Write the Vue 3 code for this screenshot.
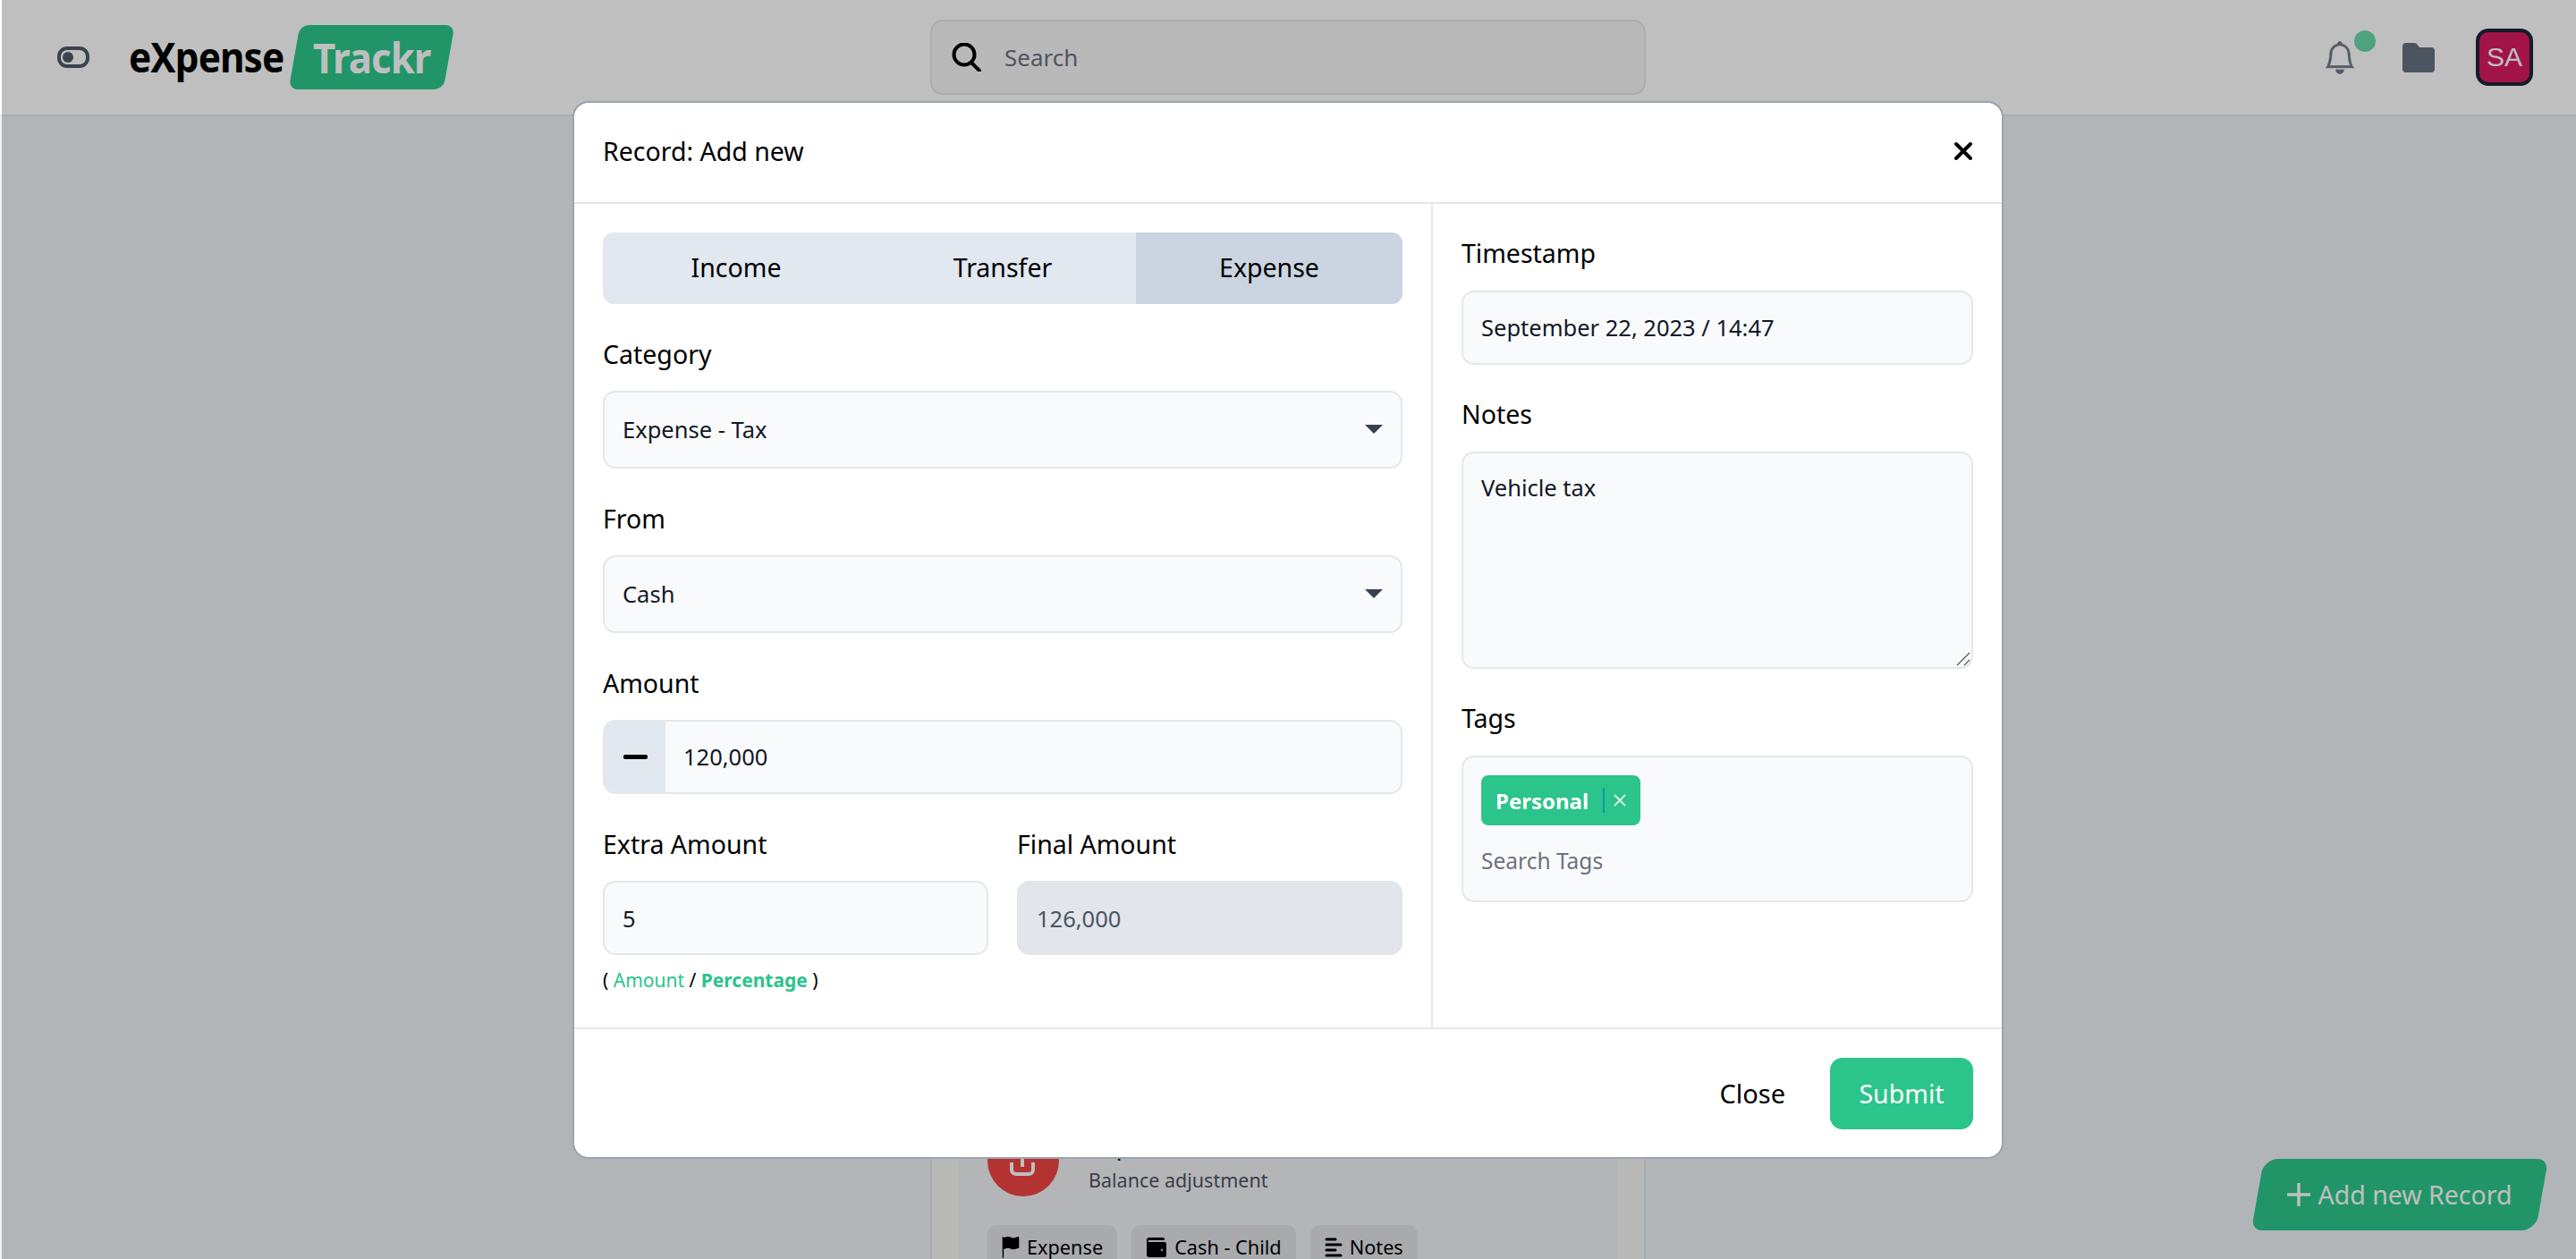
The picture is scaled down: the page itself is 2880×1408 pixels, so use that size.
<template>
  <div class="page">
    <header class="topbar">
      <div class="brand">
        <svg class="toggle" width="36" height="24" viewBox="0 0 36 24" fill="none">
          <rect x="2" y="2" width="32" height="20" rx="9" stroke="#4f5867" stroke-width="4" />
          <circle cx="12" cy="12" r="6" fill="#4f5867" />
        </svg>
        <span class="logo-word">eXpense</span>
        <span class="logo-badge"><span class="logo-badge-text">Trackr</span></span>
      </div>

      <div class="search">
        <svg width="33" height="32" viewBox="0 0 33 32" fill="none" stroke="#000" stroke-width="4">
          <circle cx="14" cy="13" r="11.5" />
          <path d="M22 22l9 9" stroke-linecap="round" />
        </svg>
        <span class="search-text">Search</span>
      </div>

      <div class="top-actions">
        <span class="bell">
          <svg width="36" height="37" viewBox="0 0 16 16" fill="#717884" stroke="#717884" stroke-width="0.3">
            <path d="M8 16a2 2 0 0 0 2-2H6a2 2 0 0 0 2 2zM8 1.918l-.797.161A4.002 4.002 0 0 0 4 6c0 .628-.134 2.197-.459 3.742-.16.767-.376 1.566-.663 2.258h10.244c-.287-.692-.502-1.49-.663-2.258C12.134 8.197 12 6.628 12 6a4.002 4.002 0 0 0-3.203-3.92L8 1.917zM14.22 12c.223.447.481.801.78 1H1c.299-.199.557-.553.78-1C2.68 10.2 3 6.88 3 6c0-2.42 1.72-4.44 4.005-4.901a1 1 0 1 1 1.99 0A5.002 5.002 0 0 1 13 6c0 .88.32 4.2 1.22 6z" />
          </svg>
          <span class="bell-dot"></span>
        </span>
        <svg class="folder" width="36" height="33" viewBox="0 0 36 33" fill="#667080">
          <path d="M4 0h9c1.5 0 2.5.6 3.5 1.8L19 5h13a4 4 0 0 1 4 4v20a4 4 0 0 1-4 4H4a4 4 0 0 1-4-4V4a4 4 0 0 1 4-4z" />
        </svg>
        <span class="avatar">SA</span>
      </div>
    </header>

    <main class="content">
      <section class="card">
        <div class="record">
          <div class="record-head">
            <span class="record-icon">
              <svg width="80" height="80" viewBox="0 0 80 80" fill="none" stroke="#fff" stroke-width="4">
                <path d="M39 20v27" />
                <path d="M27 42v8a5 5 0 0 0 5 5h14a5 5 0 0 0 5-5v-8" />
              </svg>
            </span>
            <div>
              <div class="record-title">Expense</div>
              <div class="record-sub">Balance adjustment</div>
            </div>
          </div>
          <div class="record-chips">
            <span class="chip">
              <svg width="20" height="24" viewBox="1.5 0 14 16" fill="#000" preserveAspectRatio="none">
                <path d="M14.778.085A.5.5 0 0 1 15 .5V8a.5.5 0 0 1-.314.464c-.3.12-2.6 1.036-4.186 1.036-.847 0-1.548-.28-2.158-.525C7.68 8.71 7.14 8.5 6.5 8.5c-.7 0-1.638.23-2.437.477A19.626 19.626 0 0 0 3 9.342V15.5a.5.5 0 0 1-1 0V.5a.5.5 0 0 1 1 0v.282c.226-.079.496-.17.79-.26C4.606.272 5.67 0 6.5 0c.84 0 1.524.277 2.121.519C9.286.788 9.828 1 10.5 1c.7 0 1.638-.23 2.437-.477a19.587 19.587 0 0 0 1.349-.476.5.5 0 0 1 .492.038z" />
              </svg>
              Expense
            </span>
            <span class="chip">
              <svg width="24" height="24" viewBox="0 0 24 24" fill="#000">
                <path d="M4 1h15a2 2 0 0 1 2 2v1H3.5a1 1 0 0 0 0 2H21a2 2 0 0 1 2 2v13a2 2 0 0 1-2 2H4a3 3 0 0 1-3-3V4a3 3 0 0 1 3-3z" />
                <circle cx="18" cy="15" r="1.4" fill="#a9aaad" />
              </svg>
              Cash - Child
            </span>
            <span class="chip">
              <svg width="20" height="24" viewBox="0 0 20 24" fill="none" stroke="#000" stroke-width="3" stroke-linecap="round">
                <path d="M2 3h10M2 9h16M2 15h10M2 21h16" />
              </svg>
              Notes
            </span>
          </div>
        </div>
      </section>
    </main>

    <button class="fab">
      <span class="fab-inner">
        <svg width="26" height="26" viewBox="0 0 26 26" stroke="#fff" stroke-width="3.4" stroke-linecap="round">
          <path d="M13 1v24M1 13h24" />
        </svg>
        Add new Record
      </span>
    </button>

    <div class="overlay"></div>

    <div class="modal">
      <div class="modal-head">
        <span>Record: Add new</span>
        <svg width="22" height="22" viewBox="0 0 22 22" stroke="#000" stroke-width="4" stroke-linecap="round">
          <path d="M3 3l16 16M19 3L3 19" />
        </svg>
      </div>

      <div class="modal-body">
        <div class="col-left">
          <div class="tabs">
            <div
              v-for="t in tabs"
              :key="t"
              :class="['tab', { active: t === activeTab }]"
            >
              {{ t }}
            </div>
          </div>

          <div class="field">
            <label>Category</label>
            <div class="select-wrap">
              <select class="control select"><option>Expense - Tax</option></select>
              <svg class="caret" width="20" height="10" viewBox="0 0 20 10" fill="#374151"><path d="M0 0h20L10 10z" /></svg>
            </div>
          </div>

          <div class="field">
            <label>From</label>
            <div class="select-wrap">
              <select class="control select"><option>Cash</option></select>
              <svg class="caret" width="20" height="10" viewBox="0 0 20 10" fill="#374151"><path d="M0 0h20L10 10z" /></svg>
            </div>
          </div>

          <div class="field">
            <label>Amount</label>
            <div class="amount">
              <span class="amount-sign"><i></i></span>
              <input class="amount-input" value="120,000" />
            </div>
          </div>

          <div class="split">
            <div class="field">
              <label>Extra Amount</label>
              <input class="control input" value="5" />
              <div class="hint">( <a>Amount</a> / <a class="on">Percentage</a> )</div>
            </div>
            <div class="field">
              <label>Final Amount</label>
              <input class="control input disabled" value="126,000" disabled />
            </div>
          </div>
        </div>

        <div class="col-right">
          <div class="field first">
            <label>Timestamp</label>
            <input class="control input" value="September 22, 2023 / 14:47" />
          </div>
          <div class="field">
            <label>Notes</label>
            <div class="notes-wrap">
              <textarea class="control notes">Vehicle tax</textarea>
              <svg class="grip" width="16" height="16" viewBox="0 0 16 16" stroke="#555" stroke-width="1.2">
                <path d="M1 15L15 1M9 15l6-6" />
              </svg>
            </div>
          </div>
          <div class="field">
            <label>Tags</label>
            <div class="control tags">
              <span class="tag">
                <b>Personal</b>
                <i class="tag-sep"></i>
                <svg width="14" height="14" viewBox="0 0 14 14" stroke="#d5f3e5" stroke-width="2"><path d="M1 1l12 12M13 1L1 13" /></svg>
              </span>
              <span class="tags-placeholder">Search Tags</span>
            </div>
          </div>
        </div>
      </div>

      <div class="modal-foot">
        <button class="btn-close">Close</button>
        <button class="btn-submit">Submit</button>
      </div>
    </div>
  </div>
</template>

<script setup>
const tabs = ["Income", "Transfer", "Expense"];
const activeTab = "Expense";
</script>

<style>
body {
  margin: 0;
}
</style>

<style scoped>
.page {
  position: relative;
  width: 2880px;
  height: 1408px;
  overflow: hidden;
  background: #ecf2f6;
  font-family: "Noto Sans", sans-serif;
  color: #000;
}

.topbar {
  display: grid;
  grid-template-columns: 1fr 800px 1fr;
  align-items: center;
  height: 128px;
  padding: 0 48px;
  background: #fff;
  border-bottom: 2px solid #e5e7eb;
}

.brand {
  display: flex;
  align-items: center;
  padding-left: 16px;
}

.toggle {
  margin-right: 44px;
}

.logo-word {
  display: inline-block;
  width: 171px;
  margin-top: -2px;
  font-size: 47px;
  font-weight: 700;
  letter-spacing: -1px;
  transform: scaleX(0.9);
  transform-origin: left center;
  white-space: nowrap;
}

.logo-badge {
  display: flex;
  align-items: center;
  justify-content: center;
  width: 173px;
  height: 72px;
  margin-left: 14px;
  border-radius: 10px;
  background: #2dc78b;
  transform: skewX(-10deg);
}

.logo-badge-text {
  display: inline-block;
  color: #fff;
  font-size: 47px;
  font-weight: 700;
  letter-spacing: -1px;
  transform: skewX(10deg) scaleX(0.93);
}

.search {
  display: flex;
  align-items: center;
  gap: 26px;
  height: 84px;
  box-sizing: border-box;
  padding-left: 22px;
  background: #f7f7f7;
  border: 2px solid #e5e7eb;
  border-radius: 14px;
}

.search-text {
  font-size: 26px;
  color: #6b7280;
}

.top-actions {
  display: flex;
  align-items: center;
  justify-content: flex-end;
}

.bell {
  position: relative;
  display: flex;
  margin-right: 52px;
}

.bell-dot {
  position: absolute;
  top: -12px;
  right: -22px;
  width: 24px;
  height: 24px;
  border-radius: 50%;
  background: #69d8a7;
}

.folder {
  margin-right: 46px;
}

.avatar {
  display: flex;
  align-items: center;
  justify-content: center;
  width: 64px;
  height: 64px;
  box-sizing: border-box;
  border: 4px solid #1e253a;
  border-radius: 14px;
  background: #d81b60;
  color: #fff;
  font-family: "Liberation Sans", sans-serif;
  font-size: 30px;
}

.content {
  display: flex;
  justify-content: center;
}

.card {
  width: 800px;
  box-sizing: border-box;
  margin-top: 60px;
  padding: 0 30px;
  background: #f7f7f6;
  border: 2px solid #e5e7eb;
  border-bottom: none;
  border-radius: 16px 16px 0 0;
}

.record {
  padding: 1066px 32px 0;
  background: #f1f2f5;
}

.record-head {
  display: flex;
  align-items: center;
  gap: 33px;
}

.record-icon {
  display: flex;
  width: 80px;
  height: 80px;
  border-radius: 50%;
  background: #ef4444;
}

.record-title {
  font-size: 28px;
  line-height: 40px;
}

.record-sub {
  margin-top: 3px;
  font-size: 21.5px;
  line-height: 34px;
  color: #4b5563;
}

.record-chips {
  display: flex;
  gap: 16px;
  margin-top: 32px;
}

/* the page ends 40px below the top of the chips */
.chip {
  display: flex;
  align-items: center;
  gap: 8px;
  height: 40px;
  box-sizing: border-box;
  padding: 10px 16px 0;
  border-radius: 10px 10px 0 0;
  background: #e2e3e6;
  font-size: 21.7px;
  line-height: 30px;
}

.fab {
  position: absolute;
  top: 1296px;
  left: 2524px;
  width: 318px;
  height: 80px;
  padding: 0;
  border: none;
  border-radius: 16px 12px 16px 12px;
  background: #2dc78b;
  color: #fff;
  font: inherit;
  font-size: 28.5px;
  transform: skewX(-10deg);
}

.fab-inner {
  display: flex;
  align-items: center;
  justify-content: center;
  gap: 8px;
  transform: skewX(10deg);
}

.overlay {
  position: absolute;
  inset: 0 0 0 2px;
  background: rgba(0, 0, 0, 0.25);
}

.modal {
  position: absolute;
  top: 113px;
  left: 640px;
  width: 1600px;
  height: 1183px;
  box-sizing: border-box;
  display: flex;
  flex-direction: column;
  background: #fff;
  border: 2px solid #9ca3af;
  border-radius: 18px;
}

.modal-head {
  display: flex;
  align-items: center;
  justify-content: space-between;
  height: 107px;
  padding: 0 32px 4px;
  font-size: 28.5px;
  border-bottom: 2px solid #e5e7eb;
}

.modal-body {
  display: grid;
  grid-template-columns: 960px 1fr;
  height: 921px;
}

.col-left {
  box-sizing: border-box;
  padding: 32px;
  border-right: 2px solid #e5e7eb;
}

.col-right {
  box-sizing: border-box;
  padding: 35px 32px;
}

.tabs {
  display: grid;
  grid-template-columns: repeat(3, 1fr);
  height: 80px;
  border-radius: 12px;
  overflow: hidden;
  background: #e2e8f0;
}

.tab {
  display: flex;
  align-items: center;
  justify-content: center;
  padding-bottom: 2px;
  font-size: 28.5px;
}

.tab.active {
  background: #cbd5e1;
}

.field {
  margin-top: 36px;
}

.field.first {
  margin-top: 0;
}

label {
  display: block;
  margin-bottom: 21px;
  font-size: 28.5px;
  line-height: 40px;
}

.col-right .field {
  margin-top: 35px;
}

.col-right .field.first {
  margin-top: 0;
}

.col-right label {
  margin-bottom: 22px;
}

.control {
  display: block;
  width: 100%;
  box-sizing: border-box;
  background: #f9fafb;
  border: 2px solid #e5e7eb;
  border-radius: 14px;
  color: #111827;
  font-family: inherit;
  font-size: 25.5px;
  outline: none;
}

.select-wrap {
  position: relative;
}

.select {
  height: 87px;
  padding: 0 20px 2px;
  appearance: none;
}

.caret {
  position: absolute;
  top: 38px;
  right: 22px;
}

.input {
  height: 83px;
  padding: 0 20px;
}

.first .input {
  padding-bottom: 2px;
}

.disabled {
  background: #e2e6eb;
  border-color: #e2e6eb;
  color: #4b5563;
}

.amount {
  display: flex;
  height: 83px;
  box-sizing: border-box;
  overflow: hidden;
  background: #f9fafb;
  border: 2px solid #e5e7eb;
  border-radius: 14px;
}

.amount-sign {
  display: flex;
  align-items: center;
  justify-content: center;
  width: 68px;
  background: #e2e8f0;
}

.amount-sign i {
  display: block;
  width: 27px;
  height: 5px;
  border-radius: 2px;
  background: #000;
}

.amount-input {
  flex: 1;
  padding: 0 20px 2px;
  border: none;
  outline: none;
  background: transparent;
  color: #111827;
  font-family: inherit;
  font-size: 25.5px;
}

.split {
  display: grid;
  grid-template-columns: 1fr 1fr;
  gap: 32px;
}

.hint {
  margin-top: 12px;
  font-size: 21px;
  line-height: 32px;
}

.hint a {
  color: #2bc48a;
}

.hint a.on {
  font-weight: 700;
}

.notes-wrap {
  position: relative;
}

.notes {
  height: 243px;
  padding: 21px 20px;
  resize: none;
}

.grip {
  position: absolute;
  right: 3px;
  bottom: 3px;
}

.tags {
  height: 164px;
  padding: 20px;
}

.tag {
  display: flex;
  align-items: center;
  width: 178px;
  height: 56px;
  box-sizing: border-box;
  padding-left: 16px;
  border-radius: 8px;
  background: #2bc48a;
  color: #fff;
  font-size: 24px;
}

.tag b {
  font-weight: 700;
}

.tag-sep {
  width: 2px;
  height: 28px;
  margin: 0 10px 0 16px;
  background: #0e9aa7;
}

.tags-placeholder {
  display: block;
  margin-top: 22px;
  color: #6b7280;
  font-size: 24.5px;
  line-height: 36px;
}

.modal-foot {
  display: flex;
  flex: 1;
  align-items: center;
  justify-content: flex-end;
  gap: 50px;
  padding: 0 32px;
  border-top: 2px solid #e5e7eb;
}

.btn-close {
  padding: 0;
  border: none;
  background: none;
  color: #000;
  font: inherit;
  font-size: 29px;
}

.btn-submit {
  width: 160px;
  height: 80px;
  border: none;
  border-radius: 14px;
  background: #2bc48a;
  color: #fff;
  font: inherit;
  font-size: 28.5px;
}
</style>
